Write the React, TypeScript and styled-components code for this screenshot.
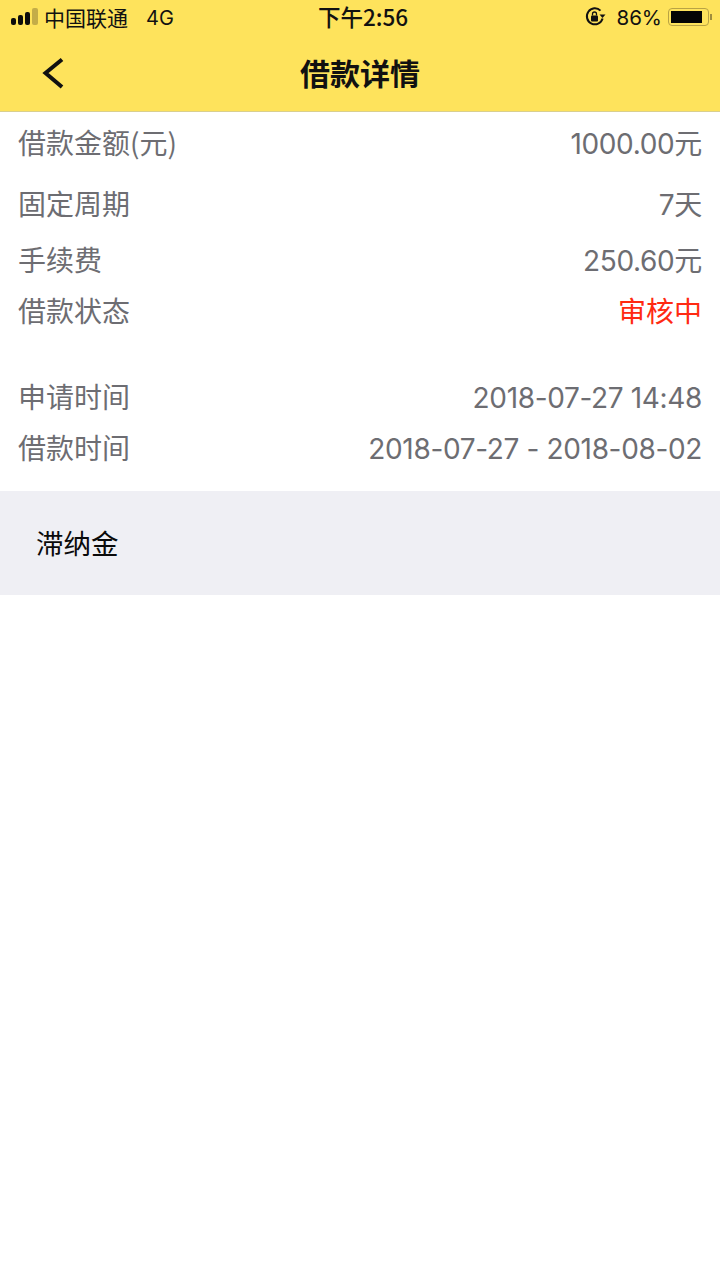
import React from "react";
import styled, { createGlobalStyle } from "styled-components";

const GlobalStyle = createGlobalStyle`
  html, body {
    margin: 0;
    padding: 0;
    background: #ffffff;
    font-family: "Noto Sans CJK SC", "Liberation Sans", sans-serif;
  }
`;

type RowProps = {
  label: string;
  value: string;
  height: number;
  red?: boolean;
};

const rows: RowProps[] = [
  { label: "借款金额(元)", value: "1000.00元", height: 60 },
  { label: "固定周期", value: "7天", height: 62 },
  { label: "手续费", value: "250.60元", height: 50 },
  { label: "借款状态", value: "审核中", height: 52, red: true },
];

const timeRows: RowProps[] = [
  { label: "申请时间", value: "2018-07-27 14:48", height: 52 },
  { label: "借款时间", value: "2018-07-27 - 2018-08-02", height: 50 },
];

export default function App() {
  return (
    <Page>
      <GlobalStyle />
      <Header>
        <StatusBar>
          <StatusLeft>
            <Signal viewBox="0 0 30 18" width="30" height="18">
              <rect x="1" y="10" width="5" height="7" rx="2" fill="#0c0c0c" />
              <rect x="8" y="7" width="5" height="10" rx="2" fill="#0c0c0c" />
              <rect x="15" y="4" width="5" height="13" rx="2" fill="#0c0c0c" />
              <rect x="22" y="0" width="6" height="17" rx="2" fill="#c4ad48" />
            </Signal>
            <Carrier>中国联通</Carrier>
            <Network>4G</Network>
          </StatusLeft>
          <Clock>下午2:56</Clock>
          <StatusRight>
            <svg viewBox="0 0 22 22" width="22" height="22" fill="none">
              <path
                d="M18.6 12.5A8 8 0 1 1 16.5 4.6"
                stroke="#111"
                strokeWidth="2"
              />
              <path d="M15.5 8.5h6l-3 3.6z" fill="#111" />
              <rect x="7" y="9.5" width="7" height="6" rx="1" fill="#111" />
              <path
                d="M8.5 9.5V8a2 2 0 0 1 4 0v1.5"
                stroke="#111"
                strokeWidth="1.3"
              />
            </svg>
            <Percent>86%</Percent>
            <Battery>
              <BatteryFill />
            </Battery>
            <BatteryCap />
          </StatusRight>
        </StatusBar>
        <NavBar>
          <BackIcon viewBox="0 0 24 36" width="24" height="36" fill="none">
            <path d="M22 4.5L5.5 18 22 32" stroke="#111" strokeWidth="4" />
          </BackIcon>
          <Title>借款详情</Title>
        </NavBar>
      </Header>
      <Section>
        {rows.map((r) => (
          <Row key={r.label} $height={r.height}>
            <Label>{r.label}</Label>
            <Value $red={r.red}>{r.value}</Value>
          </Row>
        ))}
      </Section>
      <TimeSection>
        {timeRows.map((r) => (
          <Row key={r.label} $height={r.height}>
            <Label>{r.label}</Label>
            <TimeValue>{r.value}</TimeValue>
          </Row>
        ))}
      </TimeSection>
      <LateFee>滞纳金</LateFee>
    </Page>
  );
}

const Page = styled.div`
  width: 720px;
  height: 1280px;
  background: #ffffff;
  overflow: hidden;
`;

const Header = styled.header`
  height: 111px;
  background: #fee35c;
  border-bottom: 1px solid #d9cf8e;
`;

const StatusBar = styled.div`
  height: 34px;
  padding: 0 8px 0 10px;
  display: grid;
  grid-template-columns: 1fr auto 1fr;
  align-items: center;
  color: #111111;
`;

const StatusLeft = styled.div`
  display: flex;
  align-items: center;
`;

const Signal = styled.svg`
  margin-right: 4px;
`;

const Carrier = styled.span`
  font-size: 21px;
`;

const Network = styled.span`
  font-family: "Inter", sans-serif;
  font-size: 20px;
  margin-left: 18px;
  padding-top: 2px;
`;

const Clock = styled.span`
  font-size: 22.5px;
  font-weight: 500;
  margin-left: 4px;
  padding-bottom: 2px;
`;

const StatusRight = styled.div`
  display: flex;
  align-items: center;
  justify-content: flex-end;
`;

const Percent = styled.span`
  font-family: "Inter", sans-serif;
  font-size: 20.5px;
  margin: 0 6px 0 10px;
`;

const Battery = styled.div`
  box-sizing: border-box;
  width: 41px;
  height: 18px;
  padding: 1.5px;
  border: 1.5px solid #b9a344;
  border-radius: 4px;
`;

const BatteryFill = styled.div`
  width: 31px;
  height: 12px;
  background: #050505;
`;

const BatteryCap = styled.div`
  width: 2px;
  height: 6px;
  margin-left: 1px;
  background: #9f8d3d;
`;

const NavBar = styled.div`
  position: relative;
  height: 77px;
  display: flex;
  align-items: center;
  justify-content: center;
`;

const BackIcon = styled.svg`
  position: absolute;
  left: 40px;
  top: 21px;
`;

const Title = styled.h1`
  margin: 0;
  padding-bottom: 2px;
  font-size: 30px;
  font-weight: 700;
  color: #111111;
`;

const Section = styled.section`
  padding: 0 18px;
`;

const TimeSection = styled(Section)`
  margin-top: 34px;
  padding-bottom: 19px;
`;

const Row = styled.div<{ $height: number }>`
  height: ${(p) => p.$height}px;
  display: flex;
  align-items: center;
  justify-content: space-between;
`;

const Label = styled.span`
  font-size: 28px;
  color: #6d6d72;
`;

const Value = styled.span<{ $red?: boolean }>`
  font-family: "Inter", "Noto Sans CJK SC", sans-serif;
  font-size: 28px;
  letter-spacing: ${(p) => (p.$red ? "0" : "-0.35px")};
  color: ${(p) => (p.$red ? "#ff2a12" : "#6d6d72")};
`;

const TimeValue = styled(Value)`
  padding-top: 3px;
`;

const LateFee = styled.div`
  height: 104px;
  padding: 0 0 2px 36px;
  box-sizing: border-box;
  display: flex;
  align-items: center;
  font-size: 27.5px;
  color: #0a0a0a;
  background: #efeff4;
`;
